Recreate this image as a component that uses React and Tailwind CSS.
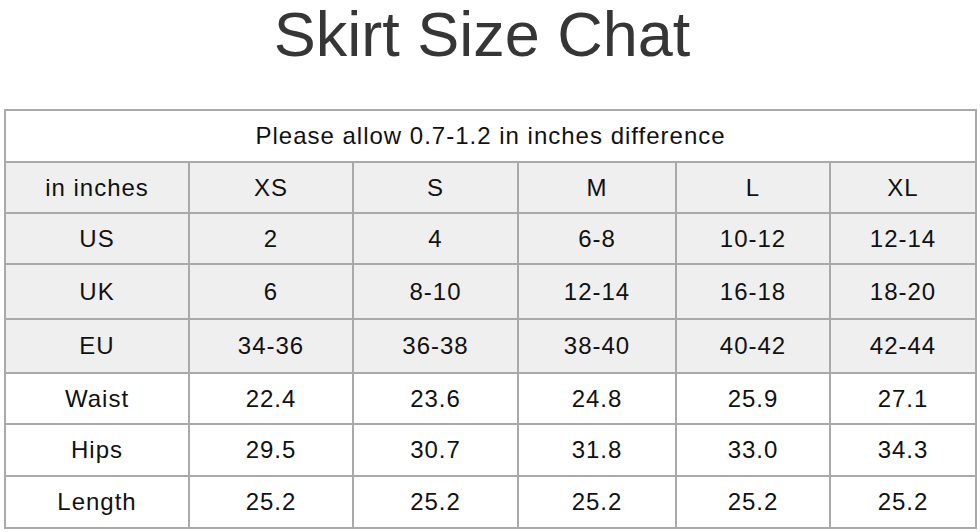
const sizes = ["XS", "S", "M", "L", "XL"];

const rows = [
  { label: "US", values: ["2", "4", "6-8", "10-12", "12-14"], shaded: true, h: "h-[51px]" },
  { label: "UK", values: ["6", "8-10", "12-14", "16-18", "18-20"], shaded: true, h: "h-[55px]" },
  { label: "EU", values: ["34-36", "36-38", "38-40", "40-42", "42-44"], shaded: true, h: "h-[54px]" },
  { label: "Waist", values: ["22.4", "23.6", "24.8", "25.9", "27.1"], shaded: false, h: "h-[51px]" },
  { label: "Hips", values: ["29.5", "30.7", "31.8", "33.0", "34.3"], shaded: false, h: "h-[52px]" },
  { label: "Length", values: ["25.2", "25.2", "25.2", "25.2", "25.2"], shaded: false, h: "h-[52px]" },
];

const cell = "border-2 border-[#a9a9a9] text-center align-middle p-0";

export default function App() {
  return (
    <div className="w-[980px] h-[532px] bg-white overflow-hidden font-['Liberation_Sans',Arial,sans-serif]">
      <div className="flex justify-center pr-[16px] h-[66px] pt-[3px]">
        <h1 className="text-[63px] leading-[63px] text-[#363636] font-normal">Skirt Size Chat</h1>
      </div>

      <div className="pl-[4px] pt-[43px]">
        <table className="table-fixed border-collapse w-[971px] text-[24px] tracking-[1px] text-[#111]">
          <colgroup>
            <col className="w-[184px]" />
            <col className="w-[164px]" />
            <col className="w-[165px]" />
            <col className="w-[158px]" />
            <col className="w-[154px]" />
            <col className="w-[146px]" />
          </colgroup>
          <tbody>
            <tr className="h-[52px] bg-white">
              <td colSpan={6} className={cell}>
                Please allow 0.7-1.2 in inches difference
              </td>
            </tr>
            <tr className="h-[51px] bg-[#efefef]">
              <td className={cell}>in inches</td>
              {sizes.map((s) => (
                <td key={s} className={cell}>
                  {s}
                </td>
              ))}
            </tr>
            {rows.map((r) => (
              <tr key={r.label} className={`${r.h} ${r.shaded ? "bg-[#efefef]" : "bg-white"}`}>
                <td className={cell}>{r.label}</td>
                {r.values.map((v, i) => (
                  <td key={i} className={cell}>
                    {v}
                  </td>
                ))}
              </tr>
            ))}
          </tbody>
        </table>
      </div>
    </div>
  );
}
